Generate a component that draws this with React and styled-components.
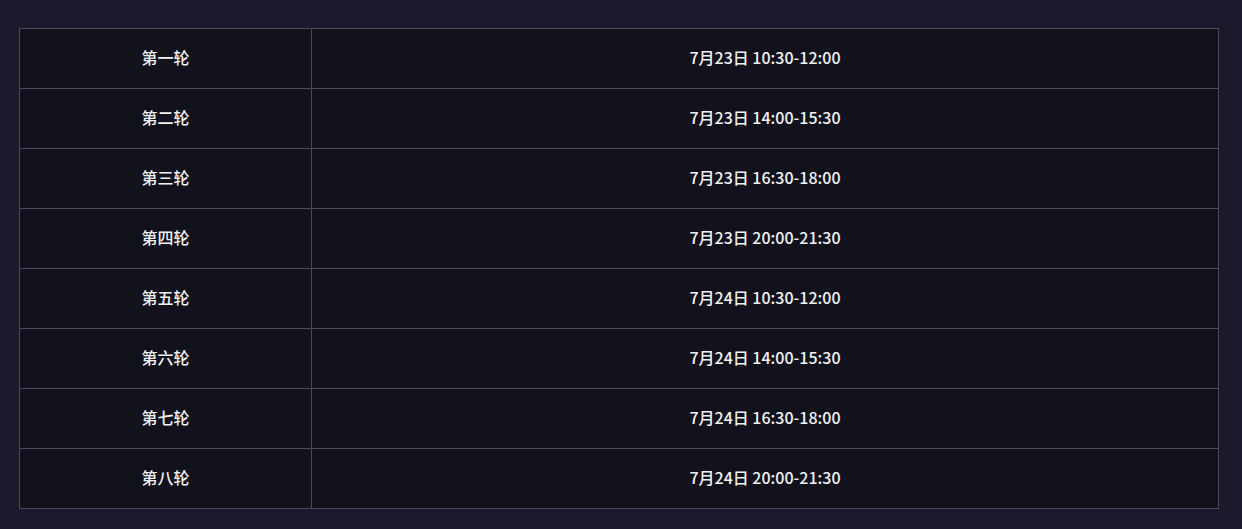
import React from "react";
import styled, { createGlobalStyle } from "styled-components";

const Global = createGlobalStyle`
  html, body { margin: 0; padding: 0; background: #1b1a2c; }
  body { font-family: "Noto Sans CJK SC", "Noto Sans", sans-serif; }
`;

const Page = styled.div`
  padding: 28px 0 20px 19px;
`;

const Table = styled.table`
  width: 1200px;
  border-collapse: collapse;
  background: #12121d;
  table-layout: fixed;
`;

const Cell = styled.td`
  border: 1px solid #4a4859;
  height: 60px;
  box-sizing: border-box;
  padding: 0 0 3px 0;
  text-align: center;
  vertical-align: middle;
  color: #f2f2f2;
  font-size: 16px;
  line-height: 20px;
  font-weight: 500;
  width: ${(p) => (p.$first ? "292px" : "auto")};
`;

const rows = [
  ["第一轮", "7月23日 10:30-12:00"],
  ["第二轮", "7月23日 14:00-15:30"],
  ["第三轮", "7月23日 16:30-18:00"],
  ["第四轮", "7月23日 20:00-21:30"],
  ["第五轮", "7月24日 10:30-12:00"],
  ["第六轮", "7月24日 14:00-15:30"],
  ["第七轮", "7月24日 16:30-18:00"],
  ["第八轮", "7月24日 20:00-21:30"],
];

export default function App() {
  return (
    <Page>
      <Global />
      <Table>
        <tbody>
          {rows.map(([a, b]) => (
            <tr key={a}>
              <Cell $first>{a}</Cell>
              <Cell>{b}</Cell>
            </tr>
          ))}
        </tbody>
      </Table>
    </Page>
  );
}
